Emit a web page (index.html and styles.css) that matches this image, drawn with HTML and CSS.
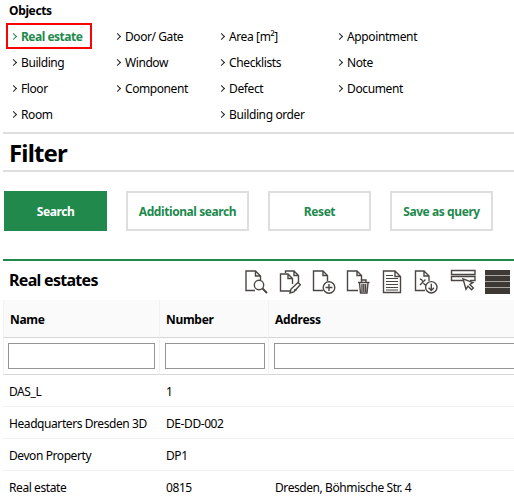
FILE: index.html
```html
<!DOCTYPE html>
<html lang="en">
<head>
<meta charset="utf-8">
<title>Real estates</title>
<link rel="stylesheet" href="styles.css">
</head>
<body>
<nav class="objects">
  <h2 class="objects-title">Objects</h2>
  <div class="objects-grid">
    <ul>
      <li class="current"><a>Real estate</a></li><li><a>Building</a></li><li><a>Floor</a></li><li><a>Room</a></li>
    </ul>
    <ul>
      <li><a>Door/ Gate</a></li><li><a>Window</a></li><li><a>Component</a></li>
    </ul>
    <ul>
      <li><a>Area [m²]</a></li><li><a>Checklists</a></li><li><a>Defect</a></li><li><a>Building order</a></li>
    </ul>
    <ul>
      <li><a>Appointment</a></li><li><a>Note</a></li><li><a>Document</a></li>
    </ul>
  </div>
</nav>
<h1 class="filter-title">Filter</h1>
<div class="actions">
  <button class="btn primary">Search</button>
  <button class="btn wide">Additional search</button>
  <button class="btn">Reset</button>
  <button class="btn">Save as query</button>
</div>
<section class="results">
  <header class="results-head">
    <h2>Real estates</h2>
    <div class="tools">
      <svg viewBox="0 0 30 26"><path d="M11 21.5H2V2h9.500l5 5v4M11.500 2v5h5"/><circle cx="15" cy="16" r="4.700"/><path class="bold" d="M18.500 19.500l4.500 4.500"/></svg>
      <svg viewBox="0 0 30 26"><path d="M7.500 4V2H16l4.500 4.500v7M16 2v4.500h4.500M12 22H2.500V5H10l4.500 4.500V15M10 5v4.500h4.500M18.500 21H16"/><path d="M12 24l1-4 7-6.500 2.300 2.300-6.500 7z"/></svg>
      <svg viewBox="0 0 30 26"><path d="M11 21.500H1.500V2H11l4.500 4.500V12M11 2v4.500h4.500"/><circle cx="17" cy="18.500" r="5.800"/><path d="M17 15v7M13.500 18.500h7"/></svg>
      <svg viewBox="0 0 30 26"><path d="M12 21.500H1.500V2H11l4.500 4.500V11M11 2v4.500h4.500"/><path d="M12 13.500h11.500M15.500 13v-2h4.500v2M13.500 14l1 10h6.500l1-10M16 15v8M17.800 15v8M19.600 15v8"/></svg>
      <svg viewBox="0 0 30 26"><path d="M3.500 2H15l5.500 5.500v16h-17zM15 2v5.500h5.500"/><path class="thin" d="M6 6.500h7M6 9.500h12M6 12.500h12M6 15.500h12M6 18.500h12M6 21h12"/></svg>
      <svg viewBox="0 0 30 26"><path d="M11 21.500H1.500V2H10l5 5v5M10 2v5h5"/><path d="M6 10l1.500.5 3 5 1.500.500M11.500 10.500L6 16"/><circle cx="17.300" cy="18.300" r="5.700"/><path d="M17.300 14.800v6.500M14.600 18.800l2.700 2.700 2.700-2.700"/></svg>
      <svg viewBox="0 0 30 26"><path d="M3.500 1.500h23.500v4H3.500zM15 11.500H3.500v-4h23.500v4h-5"/><path class="paper" d="M15 9.800l3 10.500 2-3.200 3.500 3.700 1.800-1.800-3.500-3.500 3.200-1.800z"/></svg>
      <svg viewBox="0 0 30 26"><path class="gaps" d="M3 1h25v24H3z"/><path class="solid" d="M3 1h25v5H3zM3 7h25v5H3zM3 13h25v5H3zM3 19h25v6H3z"/></svg>
    </div>
  </header>
  <table>
    <colgroup><col class="c-name"><col class="c-number"><col></colgroup>
    <thead>
      <tr class="labels"><th>Name</th><th>Number</th><th>Address</th></tr>
      <tr class="inputs"><td><input></td><td><input></td><td><input class="cut"></td></tr>
    </thead>
    <tbody>
      <tr><td>DAS_L</td><td>1</td><td></td></tr>
      <tr><td>Headquarters Dresden 3D</td><td>DE-DD-002</td><td></td></tr>
      <tr><td>Devon Property</td><td>DP1</td><td></td></tr>
      <tr><td>Real estate</td><td>0815</td><td>Dresden, Böhmische Str. 4</td></tr>
    </tbody>
  </table>
</section>
</body>
</html>
```
FILE: styles.css
```css
* { box-sizing: border-box; }
body {
  margin: 0;
  padding-left: 3px;
  height: 502px;
  overflow: hidden;
  background: #fff;
  color: #000;
  font: 12px/16px "Noto Sans", "Open Sans", sans-serif;
  letter-spacing: -0.42px;
}
h1, h2, ul { margin: 0; padding: 0; }
.objects { height: 132px; padding: 3px 0 0 3px; }
.objects-title { font-size: 12px; line-height: 16px; padding-left: 3px; margin-bottom: 4px; letter-spacing: -0.35px; }
.objects-grid { display: grid; grid-template-columns: 104px 104px 118px 1fr; }
ul { list-style: none; }
li { display: flex; align-items: center; height: 26px; padding: 2px 0 0 5px; white-space: nowrap; }
li::before {
  content: "";
  width: 4px;
  height: 4px;
  margin: 0 5px 2px 0;
  border: solid #222;
  border-width: 1px 1px 0 0;
  transform: rotate(45deg);
}
ul:nth-child(n+3) li { letter-spacing: -0.38px; }
.current {
  width: 86px;
  border: 2px solid #f00;
  padding-left: 3px;
  color: #22894d;
  font-weight: 700;
  letter-spacing: -0.5px;
}
.current::before { border-color: #22894d; border-width: 1.500px 1.500px 0 0; }
.filter-title {
  height: 40px;
  border: solid #dedede;
  border-width: 2px 0;
  padding-left: 6px;
  font-size: 24px;
  line-height: 37px;
  letter-spacing: -0.85px;
}
.filter-title { word-spacing: 0; }
.actions { display: flex; gap: 19px; padding: 19px 0 28px 1px; }
.btn {
  width: 103px;
  height: 40px;
  padding: 2px 0 0;
  border: 2px solid #dedede;
  background: #fff;
  color: #22894d;
  font: inherit;
  font-weight: 700;
  letter-spacing: -0.42px;
}
.btn.wide { width: 123px; }
.btn.primary { background: #22894d; border-color: #22894d; color: #fff; }
.results { border-top: 2px solid #22894d; }
.results-head { display: flex; height: 39px; padding-left: 6px; }
.results-head h2 { width: 235px; font-size: 16px; line-height: 38px; letter-spacing: -0.7px; }
.tools { display: flex; gap: 4px; padding-top: 8px; }
.tools svg { width: 30px; height: 26px; flex: none; fill: none; stroke: #4b4643; stroke-width: 1.4; }
.tools .thin { stroke-width: 1; }
.tools .bold { stroke-width: 2; }
.tools .paper { fill: #fff; }
.tools .gaps { fill: #aaa6a3; stroke: none; }
.tools .solid { fill: #3e3935; stroke: none; }
table { width: 511px; table-layout: fixed; border-collapse: separate; border-spacing: 0; }
.c-name { width: 156px; }
.c-number { width: 109px; }
th, td { padding: 2px 0 0 7px; text-align: left; white-space: nowrap; border-bottom: 1px solid #f0f0f0; height: 32px; }
tbody td:first-child { padding-left: 6px; }
.labels th { height: 38px; padding-left: 6px; background: #fafafa; border-bottom-color: #d6d6d6; border-left: 1px solid #f2f2f2; letter-spacing: -0.3px; }
.inputs td { height: 37px; padding: 0 3px 0 5px; border-bottom-color: #d6d6d6; border-left: 1px solid #f2f2f2; }
.inputs td:first-child { padding: 0 4px; }
.inputs td:last-child { padding-right: 0; }
.inputs input { display: block; width: 100%; height: 26px; padding: 0 4px; border: 1px solid #949494; background: #fff; }
.inputs .cut { border-right: 0; }
tbody tr:last-child td { border-bottom: 0; }
```
